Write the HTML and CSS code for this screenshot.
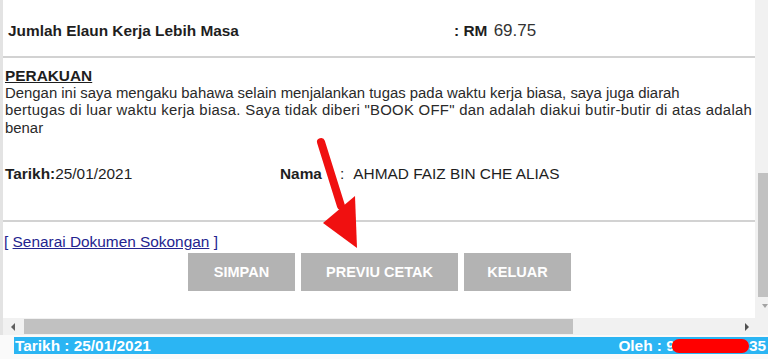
FILE: index.html
```html
<!DOCTYPE html>
<html lang="ms">
<head>
    <meta charset="UTF-8">
    <title>Tuntutan Elaun Kerja Lebih Masa</title>
    <link rel="stylesheet" href="styles.css">
</head>
<body>
    <div class="page">
        <div class="viewport">
            <div class="content">
                <div class="total-row">
                    <span class="total-label">Jumlah Elaun Kerja Lebih Masa</span>
                    <span class="total-value"><b>: RM</b> <span class="amount">69.75</span></span>
                </div>

                <div class="declaration">
                    <div class="decl-title">PERAKUAN</div>
                    <p class="decl-text">Dengan ini saya mengaku bahawa selain menjalankan tugas pada waktu kerja biasa, saya juga diarah<br><span class="wide">bertugas di luar waktu kerja biasa. Saya tidak diberi "BOOK OFF" dan adalah diakui butir-butir di atas adalah</span><br>benar</p>

                    <div class="sign-row">
                        <div class="sign-date"><b>Tarikh:</b>25/01/2021</div>
                        <div class="sign-name"><b class="name-label">Nama</b>:<span class="name-value">AHMAD FAIZ BIN CHE ALIAS</span></div>
                    </div>
                </div>

                <div class="actions">
                    <a href="#" class="doc-link">[ <u>Senarai Dokumen Sokongan</u> ]</a>
                    <div class="buttons">
                        <button class="btn btn-simpan">SIMPAN</button>
                        <button class="btn btn-cetak">PREVIU CETAK</button>
                        <button class="btn btn-simpan">KELUAR</button>
                    </div>
                </div>
            </div>

            <!-- scrollbar palsu -->
            <div class="vscroll">
                <div class="vthumb"></div>
                <div class="arrow-down"></div>
            </div>
            <div class="hscroll">
                <div class="arrow-left"></div>
                <div class="hthumb"></div>
                <div class="arrow-right"></div>
            </div>
            <div class="corner"></div>
        </div>

        <div class="status-wrap">
            <div class="status-bar">
                <span>Tarikh : 25/01/2021</span>
                <span class="status-user">Oleh : 9<span class="redact">000000000</span>35</span>
            </div>
        </div>

        <svg class="pointer" width="768" height="359" viewBox="0 0 768 359">
            <line x1="321" y1="142" x2="341" y2="206" stroke="#f01010" stroke-width="8" stroke-linecap="round"/>
            <polygon points="323,223 355,196 357,248" fill="#f01010"/>
        </svg>
    </div>
</body>
</html>
```

FILE: styles.css
```css
body {
    margin: 0;
    font-family: "Liberation Sans", Arial, sans-serif;
    font-size: 15.4px;
    color: #1e1e1e;
    background: #ececec;
}

.page {
    position: relative;
    width: 768px;
    height: 359px;
    overflow: hidden;
    background: #fff;
}

.viewport {
    display: grid;
    grid-template-columns: 752px 13px;
    grid-template-rows: 318px 17px;
    border-left: 3px solid #e3e3e3;
}

.content {
    overflow: hidden;
}

.total-row {
    display: flex;
    align-items: center;
    height: 50px;
    padding: 6px 0 0 5px;
    border-bottom: 2px solid #d2d2d2;
}

.total-label {
    width: 446px;
    font-weight: bold;
}

.total-value {
    color: #333;
}

.total-value b {
    color: #1e1e1e;
}

.amount {
    font-size: 17px;
    margin-left: 2px;
}

.declaration {
    padding: 9px 0 0 2px;
    line-height: 17.5px;
    border-bottom: 2px solid #d2d2d2;
    height: 153px;
}

.decl-title {
    font-weight: bold;
    text-decoration: underline;
}

.decl-text {
    margin: 0;
    font-size: 14.9px;
    white-space: nowrap;
    color: #2a2a2a;
}

.decl-text .wide {
    letter-spacing: 0.28px;
}

.sign-row {
    display: flex;
    margin-top: 28px;
}

.sign-date {
    width: 275px;
}

.name-label {
    display: inline-block;
    width: 60px;
}

.name-value {
    margin-left: 9px;
}

.actions {
    padding: 11px 0 0 1px;
    line-height: 17.5px;
}

.doc-link {
    color: #24248f;
    text-decoration: none;
}

.buttons {
    display: flex;
    justify-content: center;
    gap: 6px;
    margin-top: 2px;
}

.btn {
    height: 38px;
    border: none;
    background: #b3b3b3;
    color: #fff;
    font-family: inherit;
    font-size: 14.5px;
    font-weight: bold;
    padding: 0;
}

.btn-simpan {
    width: 107px;
}

.btn-cetak {
    width: 157px;
}

.vscroll {
    background: #f1f1f1;
}

.vthumb {
    margin: 173px 0 0 3px;
    height: 124px;
    background: #c1c1c1;
}

.arrow-down {
    margin: 7px 0 0 7px;
    width: 0;
    height: 0;
    border-left: 3px solid transparent;
    border-right: 3px solid transparent;
    border-top: 4px solid #a3a3a3;
}

.hscroll {
    display: flex;
    align-items: center;
    background: #f1f1f1;
}

.arrow-left {
    margin-left: 8px;
    width: 0;
    height: 0;
    border-top: 4px solid transparent;
    border-bottom: 4px solid transparent;
    border-right: 4px solid #606060;
}

.hthumb {
    margin-left: 9px;
    width: 549px;
    height: 15px;
    background: #c1c1c1;
}

.arrow-right {
    margin-left: 172px;
    width: 0;
    height: 0;
    border-top: 4px solid transparent;
    border-bottom: 4px solid transparent;
    border-left: 4px solid #505050;
}

.corner {
    background: #f1f1f1;
}

.status-wrap {
    padding: 2px 0 0 14px;
    height: 22px;
    background: #fafafa;
    border-bottom: 1px solid #d8d8d8;
}

.status-bar {
    display: flex;
    justify-content: space-between;
    align-items: center;
    height: 17px;
    padding-left: 1px;
    background: #2bb5f3;
    color: #fff;
    font-weight: bold;
    white-space: nowrap;
}

.status-user {
    margin-right: 2px;
}

.redact {
    display: inline-block;
    margin-left: -3px;
    background: #f00;
    color: #f00;
    line-height: 14px;
    border-radius: 7px;
}

.pointer {
    position: absolute;
    left: 0;
    top: 0;
    pointer-events: none;
}
```
